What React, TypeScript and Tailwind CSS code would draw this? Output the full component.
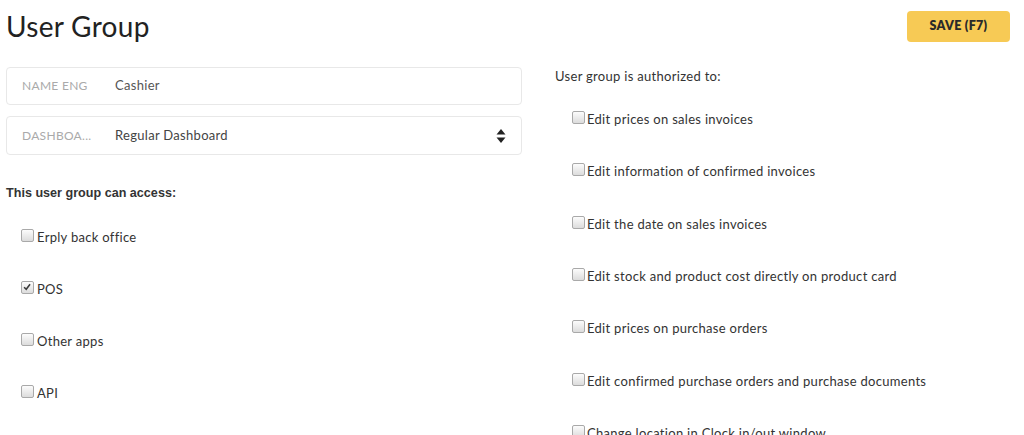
import React from "react";

function Box({ checked }: { checked?: boolean }) {
  return (
    <span className="relative inline-block w-[13px] h-[13px] rounded-[2px] border border-[#a9a9a9] bg-gradient-to-b from-[#fcfcfc] to-[#dcdcdc] shrink-0 -mt-[3px]">
      {checked && (
        <svg viewBox="0 0 13 13" className="absolute inset-0 w-[11px] h-[11px]">
          <path d="M2.5 6.2 L5 8.6 L9.5 2.6" fill="none" stroke="#3a3a3a" strokeWidth="1.8" />
        </svg>
      )}
    </span>
  );
}

function Item({ label, checked }: { label: string; checked?: boolean }) {
  return (
    <div className="flex items-center gap-[3px] h-[52px]">
      <Box checked={checked} />
      <span className="text-[13px] text-[#333] leading-4 tracking-[0.3px]">{label}</span>
    </div>
  );
}

export default function App() {
  const access = [
    { l: "Erply back office" },
    { l: "POS", c: true },
    { l: "Other apps" },
    { l: "API" },
  ];
  const auth = [
    "Edit prices on sales invoices",
    "Edit information of confirmed invoices",
    "Edit the date on sales invoices",
    "Edit stock and product cost directly on product card",
    "Edit prices on purchase orders",
    "Edit confirmed purchase orders and purchase documents",
    "Change location in Clock in/out window",
  ];
  return (
    <div className="w-[1024px] h-[435px] overflow-hidden bg-white font-['Lato','Noto_Sans',sans-serif]">
      <div className="flex justify-between items-start pl-[6px] pr-[14px]">
        <h1 className="text-[28px] leading-[34px] mt-[9px] text-[#222] tracking-[0.3px]">User Group</h1>
        <button className="mt-[11px] w-[103px] h-[31px] rounded-[4px] bg-[#f7ca55] text-[12.5px] font-extrabold text-[#2a2a2a] tracking-[0.3px] font-['Lato',sans-serif]">
          SAVE (F7)
        </button>
      </div>
      <div className="flex mt-[24px] pl-[6px]">
        <div className="w-[516px] shrink-0">
          <div className="h-[38px] border border-[#e8e8e8] rounded-[4px] flex items-center">
            <span className="w-[108px] pl-[15px] text-[12px] text-[#aaaaaa] tracking-[0.3px]">NAME ENG</span>
            <span className="text-[13px] text-[#555] tracking-[0.3px]">Cashier</span>
          </div>
          <div className="mt-[11px] h-[39px] border border-[#e8e8e8] rounded-[4px] flex items-center pr-[15px]">
            <span className="w-[108px] pl-[15px] text-[12px] text-[#aaaaaa] tracking-[0.3px]">DASHBOA...</span>
            <span className="text-[13px] text-[#444] flex-1 tracking-[0.3px]">Regular Dashboard</span>
            <svg viewBox="0 0 10 16" className="w-[10px] h-[16px]">
              <path d="M5 1 L9.5 6.5 L0.5 6.5 Z" fill="#222" />
              <path d="M0.5 9.5 L9.5 9.5 L5 15 Z" fill="#222" />
            </svg>
          </div>
          <div className="mt-[30px] text-[12.6px] leading-4 font-bold text-[#333] font-['Liberation_Sans',Arial,sans-serif]">
            This user group can access:
          </div>
          <div className="mt-[10px] pl-[15px]">
            {access.map((a) => (
              <Item key={a.l} label={a.l} checked={a.c} />
            ))}
          </div>
        </div>
        <div className="ml-[33px] flex-1 pt-[1px]">
          <div className="text-[13px] leading-4 text-[#333] tracking-[0.3px]">User group is authorized to:</div>
          <div className="mt-[9px] pl-[17px]">
            {auth.map((a) => (
              <div key={a} className="flex items-center gap-[2px] h-[52.3px]">
                <Box />
                <span className="text-[13px] text-[#333] leading-4 tracking-[0.3px]">{a}</span>
              </div>
            ))}
          </div>
        </div>
      </div>
    </div>
  );
}
